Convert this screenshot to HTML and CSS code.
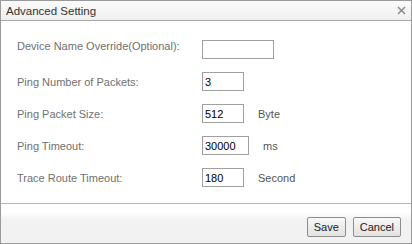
FILE: index.html
```html
<!DOCTYPE html>
<html lang="en">
<head>
  <meta charset="UTF-8" />
  <title>Advanced Setting</title>
  <link rel="stylesheet" href="styles.css">
</head>
<body>
  <div class="dialog">
    <div class="titlebar">
      <span class="title">Advanced Setting</span>
      <svg class="close" width="9" height="9" viewBox="0 0 9 9">
        <path d="M1 1 L8 8 M8 1 L1 8" stroke="#8a8a8a" stroke-width="1.5" />
      </svg>
    </div>

    <div class="content">
      <div class="form">
        <label class="top">Device Name Override(Optional):</label>
        <div class="field"><input class="wide" type="text" value=""></div>

        <label>Ping Number of Packets:</label>
        <div class="field"><input type="text" value="3"></div>

        <label>Ping Packet Size:</label>
        <div class="field"><input type="text" value="512"><span class="unit">Byte</span></div>

        <label>Ping Timeout:</label>
        <div class="field"><input class="mid" type="text" value="30000"><span class="unit">ms</span></div>

        <label>Trace Route Timeout:</label>
        <div class="field"><input type="text" value="180"><span class="unit">Second</span></div>
      </div>
    </div>

    <div class="footer">
      <button>Save</button>
      <button>Cancel</button>
    </div>
  </div>
</body>
</html>
```

FILE: styles.css
```css
* { box-sizing: border-box; margin: 0; padding: 0; }

body {
  background: #fff;
  font-family: 'Liberation Sans', Arial, sans-serif;
  font-size: 11px;
}

.dialog {
  width: 412px;
  height: 244px;
  border: 1px solid #9a9a9a;
  display: flex;
  flex-direction: column;
}

.titlebar {
  height: 20px;
  background: linear-gradient(#fbfbfb, #efefef);
  border-bottom: 1px solid #a8a8a8;
  display: flex;
  align-items: center;
  justify-content: space-between;
  padding: 0 5px 0 5px;
}

.title {
  color: #333;
  font-size: 11.5px;
}

.content {
  height: 183px;
  border-bottom: 1px solid #b4b4b4;
  padding: 19px 0 0 16px;
}

.form {
  display: grid;
  grid-template-columns: 185px 1fr;
  row-gap: 13px;
  align-items: center;
}

.form label {
  color: #707070;
}

.form label.top {
  align-self: start;
}

.field {
  display: flex;
  align-items: center;
}

.field input {
  width: 42px;
  height: 19px;
  border: 1px solid #a0a0a0;
  padding: 0 2px;
  font: 11px 'Liberation Sans', Arial, sans-serif;
  color: #000;
}

.field input.wide { width: 72px; }
.field input.mid { width: 47px; }

.unit {
  color: #555;
  padding-left: 14px;
}

.footer {
  flex: 1;
  background: linear-gradient(#fff 0, #fff 8px, #f2f2f2 16px, #f2f2f2);
  display: flex;
  justify-content: flex-end;
  gap: 7px;
  padding: 13px 10px 0 0;
}

.footer button {
  height: 20px;
  padding: 0 6px;
  border: 1px solid #8c8c8c;
  border-radius: 2px;
  background: linear-gradient(#f8f8f8, #e2e2e2);
  color: #222;
  font: 11px 'Liberation Sans', Arial, sans-serif;
}
```
